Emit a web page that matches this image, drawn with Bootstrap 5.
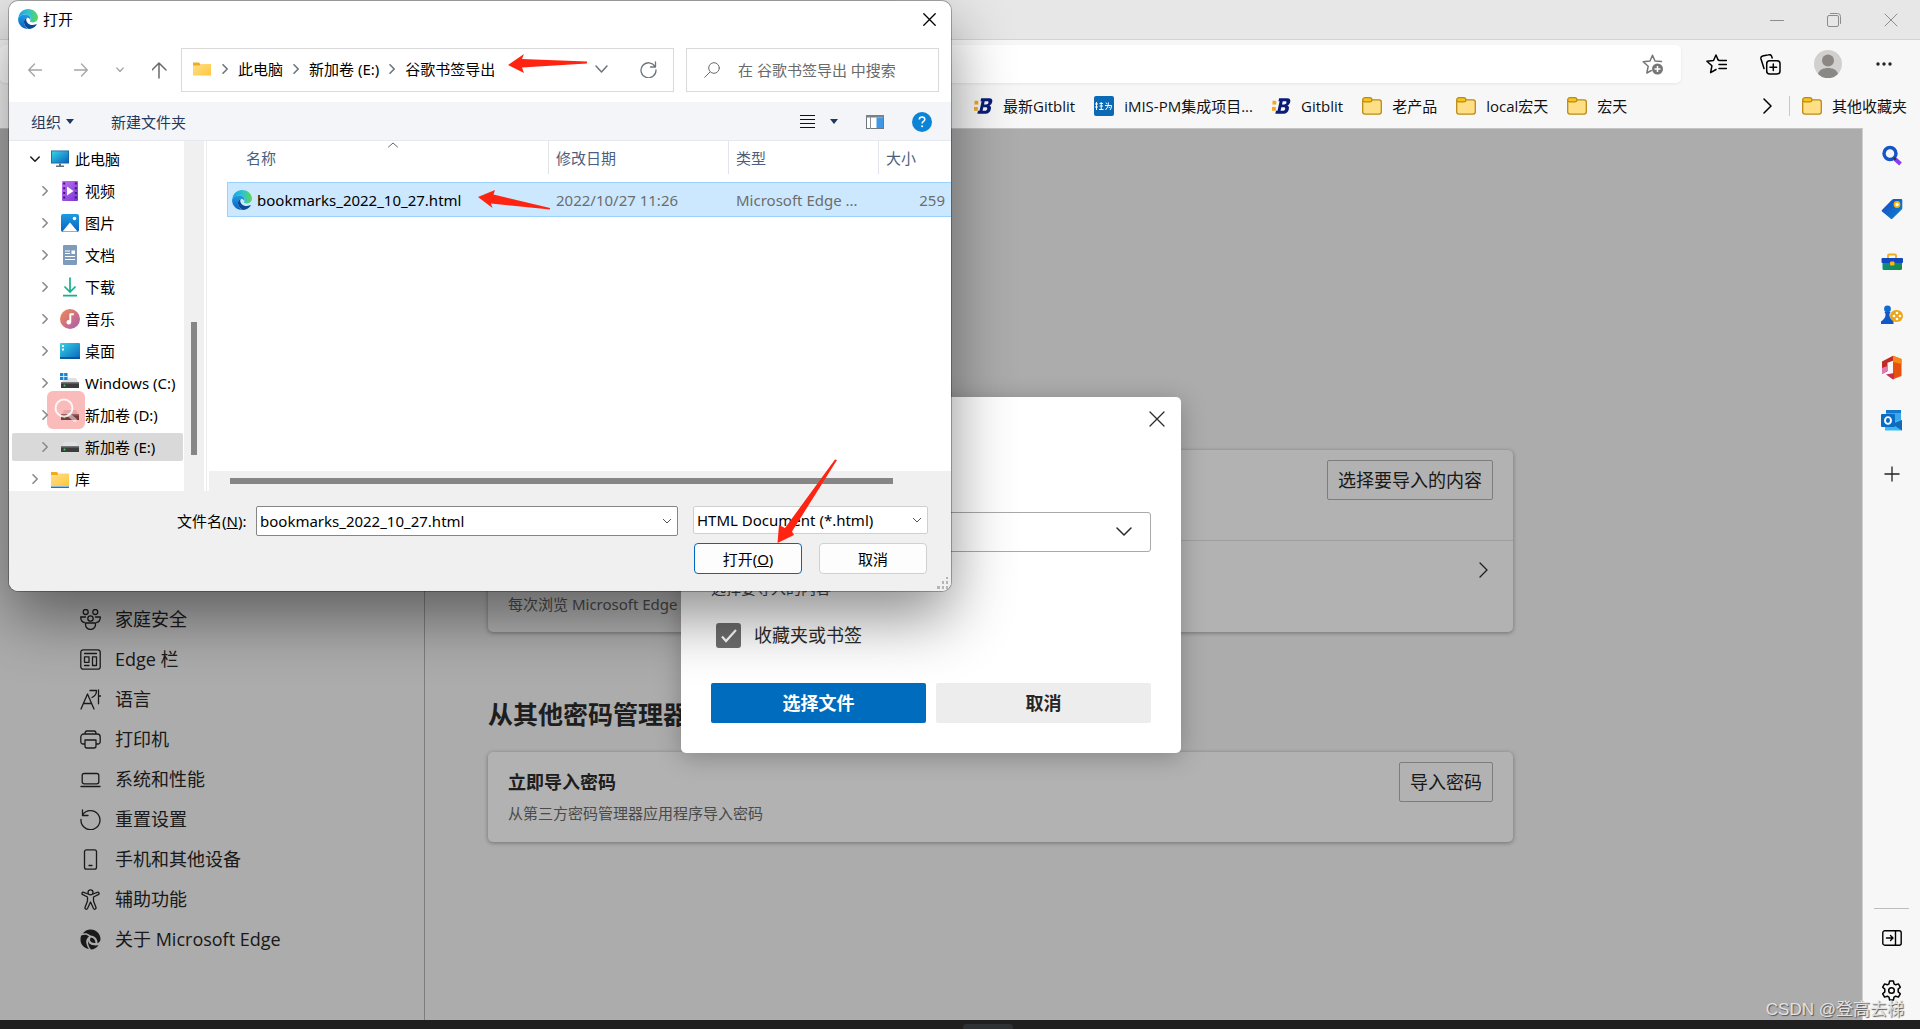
<!DOCTYPE html>
<html lang="zh-CN">
<head>
<meta charset="utf-8">
<meta name="viewport" content="width=device-width, initial-scale=1">
<title>导入浏览器数据</title>
<link href="https://cdn.jsdelivr.net/npm/bootstrap@5.3.0/dist/css/bootstrap.min.css" rel="stylesheet">
<style>
  :root { --ui: "Noto Sans", "Noto Sans CJK SC", sans-serif; --ui-web: "Open Sans", "Noto Sans CJK SC", sans-serif; }
  body { font-family: var(--ui); font-size: 15px; line-height: 20px; color: #000; background: #f7f7f7; overflow: hidden; }
  button, input, select { font-family: inherit; }
  svg { display: block; flex: none; }
  .bare { border: 0; background: none; padding: 0; color: inherit; display: flex; align-items: center; justify-content: center; }
  .ln { fill: none; stroke: currentColor; stroke-linecap: round; stroke-linejoin: round; }

  /* browser frame */
  .win-bar { height: 40px; background: #e7e7e7; border-bottom: 1px solid #d3d3d3; color: #8c8c8c; gap: 43px; padding-right: 22px; }
  .tool-bar { height: 45px; padding: 3px 27px 0 0; gap: 33px; }
  .omnibox { height: 38px; background: #fff; border-radius: 5px; box-shadow: 0 1px 3px rgba(0,0,0,.08); padding-right: 17px; margin-right: -8px; color: #767676; }
  .omnibox input { border: 0; outline: 0; background: none; }
  .fav-bar { height: 43px; padding: 0 13px 2px 974px; gap: 19px; font-family: var(--ui-web); }
  .fav-bar a { display: flex; align-items: center; gap: 10px; color: #111; text-decoration: none; white-space: nowrap; }
  .fav-rule { width: 1px; height: 20px; background: #c9c9c9; }

  /* settings page */
  .page { background: #f6f6f6; border-top: 1px solid #c4c4c4; border-right: 1px solid #d0d0d0; color: #2b2b2b; }
  .set-nav { width: 425px; border-right: 1px solid #b4b4b4; padding: 0 0 61px 80px; font-family: var(--ui-web); }
  .set-nav a { display: flex; align-items: center; height: 40px; gap: 14px; font-size: 18px; color: #262626; text-decoration: none; }
  .set-nav svg { width: 21px; height: 21px; }
  .set-main { padding: 321px 62px 0 63px; }
  .set-inner { max-width: 1025px; }
  .panel { background: #fff; border-radius: 5px; box-shadow: 0 1px 4px rgba(0,0,0,.35); }
  .panel-row { min-height: 90px; padding: 10px 20px; }
  .panel-row + .panel-row { min-height: 92px; border-top: 1px solid #e2e2e2; }
  .panel-name { font-size: 18px; line-height: 22px; font-weight: 700; padding-top: 9px; }
  .hint { color: #6b6b6b; font-size: 15px; }
  .panel-name + .hint { margin-top: 10px; }
  .set-title { font-size: 25px; line-height: 34px; font-weight: 700; margin: 65px 0 21px; white-space: nowrap; }
  .line-btn { height: 40px; padding: 0 10px; border: 1px solid #b4b4b4; border-radius: 2px; background: none; color: #262626; font-size: 18px; }

  /* import sheet */
  .veil { background: rgba(0,0,0,.3); }
  .sheet { width: 500px; height: 356px; background: #fff; border-radius: 5px; padding: 0 30px 30px; box-shadow: 0 4px 24px rgba(0,0,0,.25); color: #2b2b2b; }
  .sheet-x { height: 44px; margin-right: -14px; }
  .sheet-pick { margin-top: 71px; }
  .sheet-pick svg { margin-right: 19px; }
  .sheet select { height: 40px; border: 1px solid #a9a9a9; border-radius: 3px; background: #fff; appearance: none; color: #2b2b2b; }
  .sheet-label { margin-top: 26px; color: #444; }
  .sheet-check { gap: 13px; margin-bottom: 35px; font-size: 18px; }
  .sheet-acts { gap: 10px; }
  .tick { appearance: none; width: 25px; height: 25px; margin: 0 0 0 5px; border-radius: 3px; background: #6f6f6f url("data:image/svg+xml,%3Csvg xmlns='http://www.w3.org/2000/svg' viewBox='0 0 25 25'%3E%3Cpath d='M6 13.5l4 4.5L20 7' fill='none' stroke='%23fff' stroke-width='2.2'/%3E%3C/svg%3E"); }
  .sheet-btn { flex: 1; height: 40px; border: 0; border-radius: 2px; font-size: 18px; font-weight: 700; background: #ededed; color: #262626; }
  .sheet-btn.go { background: #006cbe; color: #fff; }

  /* right rail */
  .lower { min-height: 0; }
  .rail { width: 57px; padding: 1px 0 3px; }
  .rail button { height: 53px; width: 100%; }
  .rail-rule { width: 35px; height: 1px; background: #bdbdbd; margin-bottom: 2px; }
  .task-bar { height: 9px; background: #202020; }
  .task-tab { width: 50px; height: 5px; background: #2f3235; border-radius: 4px 4px 0 0; margin-left: 56px; }

  /* file picker window */
  .picker { left: 9px; top: 1px; width: 942px; height: 590px; background: #fff; border-radius: 9px; box-shadow: 0 0 0 1px rgba(0,0,0,.28), 0 26px 62px rgba(0,0,0,.45); overflow: hidden; z-index: 5; }
  .pk-title { height: 47px; padding: 0 15px 11px 9px; gap: 5px; }
  .pk-addr { height: 44px; padding: 0 12px 0 0; color: #6a6a6a; }
  .pk-nav { width: 172px; padding: 0 0 0 19px; gap: 28px; }
  .pk-nav .dim { color: #a5a5a5; }
  .crumbs { width: 493px; border: 1px solid #d9d9d9; padding: 0 16px 2px 10px; color: #000; white-space: nowrap; }
  .crumbs a { color: #000; text-decoration: none; }
  .crumbs > svg + svg, .crumbs a + svg { width: 10px; height: 10px; margin: 0 8px; color: #6c757d; }
  .find { width: 253px; border: 1px solid #d9d9d9; padding: 0 17px; gap: 18px; margin-left: 12px; }
  .find input { border: 0; outline: 0; padding: 0; min-width: 0; width: 100%; }
  .find input::placeholder { color: #6a6a6a; opacity: 1; }
  .pk-tools { height: 39px; margin-top: 10px; background: #f3f5f8; border-bottom: 1px solid #e5e8ec; padding: 1px 19px 0 22px; color: #1f3a5f; gap: 28px; }
  .caret-gap { gap: 5px; margin-right: 9px; }
  .view-gap { gap: 15px; }
  .pk-body { height: 350px; }
  .tree { width: 175px; padding: 2px 0 0; margin: 0; list-style: none; overflow: hidden; white-space: nowrap; }
  .tree li { height: 28px; margin: 2px 1px 4px 3px; padding-left: 28px; display: flex; align-items: center; }
  .tree li.top { padding-left: 18px; }
  .tree li.on { background: #d9d9d9; border-radius: 2px; }
  .tree li > svg:first-child { width: 10px; height: 10px; margin-right: 10px; color: #8a8a8a; }
  .tree li.open > svg:first-child { color: #222; }
  .tree li > svg:nth-child(2) { width: 20px; height: 20px; margin-right: 5px; }
  .v-track { width: 20px; background: #f0f0f0; padding: 181px 7px 0; }
  .v-thumb { height: 133px; background: #868686; }
  .files { border-left: 1px solid #ececec; margin-left: 2px; }
  .file-table { width: 724px; margin-left: 20px; table-layout: fixed; border-collapse: separate; border-spacing: 0; white-space: nowrap; }
  .col-name { width: 322px; } .col-date { width: 180px; } .col-type { width: 150px; } .col-size { width: 72px; }
  .file-table th { padding: 0 0 8px; font-weight: 400; color: #4a5f80; position: relative; }
  .file-table th span { display: flex; align-items: center; height: 33px; padding-left: 7px; border-right: 1px solid #e2e5e9; }
  .file-table th:first-child span { padding-left: 19px; }
  .file-table th:last-child span { border: 0; }
  .file-table th svg { position: absolute; left: 161px; top: 1px; color: #666; }
  .file-table td { height: 35px; padding: 0 6px 0 7px; background: #cce8ff; border: solid #99d1ff; border-width: 1px 0; color: #6d6d6d; overflow: hidden; }
  .file-table td:first-child { border-left-width: 1px; padding-left: 4px; color: #000; }
  .file-name { gap: 5px; }
  .h-track { height: 20px; background: #f0f0f0; margin-left: 2px; padding: 7px 58px 0 21px; }
  .h-thumb { height: 6px; background: #868686; }
  .pk-foot { background: #f0f0f0; padding: 15px 23px 0 168px; height: 100px; }
  .foot-label { width: 79px; line-height: 30px; }
  .box { height: 30px; padding: 0 26px 1px 3px; color: #000; border: 1px solid #868686; border-radius: 2px; outline: 0; appearance: none; background: #fff url("data:image/svg+xml,%3Csvg xmlns='http://www.w3.org/2000/svg' viewBox='0 0 10 10'%3E%3Cpath d='M1 3l4 4 4-4' fill='none' stroke='%23555'/%3E%3C/svg%3E") no-repeat right 5px center / 10px; }
  .box-type { width: 235px; height: 28px; margin-left: 15px; border-color: #cfcfcf; }
  .foot-acts { gap: 17px; padding: 7px 1px 0 0; }
  .win-btn { height: 31px; width: 108px; border: 1px solid #d0d0d0; border-radius: 4px; background: #fdfdfd; color: #000; padding: 0; }
  .win-btn.main-act { border-color: #0067c0; }
  .grip { right: 2px; bottom: 2px; color: #b5b5b5; }
  .marks { left: 0; top: 0; z-index: 7; pointer-events: none; }
  .snap { left: 47px; top: 391px; width: 38px; height: 38px; border-radius: 6px; background: rgba(240,55,55,.34); z-index: 6; }
  .stamp { right: 16px; bottom: 8px; z-index: 8; font-family: "Liberation Sans", "Noto Sans CJK SC", sans-serif; font-size: 17px; line-height: 22px; color: #e2e2e2; text-shadow: 1px 1px 1px #555; }
</style>
</head>
<body class="vh-100 d-flex flex-column position-relative">

<svg width="0" height="0" class="position-absolute" aria-hidden="true">
  <defs>
    <linearGradient id="gA" x1="0" y1="0" x2="1" y2="0"><stop offset="0" stop-color="#1f9fe0"/><stop offset=".5" stop-color="#2bc3d2"/><stop offset="1" stop-color="#5fd655"/></linearGradient>
    <linearGradient id="gB" x1="0" y1="0" x2="0" y2="1"><stop offset="0" stop-color="#1b9de2"/><stop offset="1" stop-color="#0a62c0"/></linearGradient>
    <linearGradient id="gC" x1="0" y1="0" x2="1" y2="1"><stop offset="0" stop-color="#36d3e6"/><stop offset="1" stop-color="#0a63bd"/></linearGradient>
    <linearGradient id="gD" x1="0" y1="0" x2="1" y2="1"><stop offset="0" stop-color="#ffe08a"/><stop offset="1" stop-color="#ffc63c"/></linearGradient>
    <linearGradient id="gE" x1="0" y1="0" x2="1" y2="1"><stop offset="0" stop-color="#f58a4b"/><stop offset="1" stop-color="#a85bb5"/></linearGradient>
    <linearGradient id="gF" x1="0" y1="0" x2="1" y2="1"><stop offset="0" stop-color="#c070f0"/><stop offset="1" stop-color="#7b35d6"/></linearGradient>
    <linearGradient id="gG" x1="0" y1="0" x2="1" y2="1"><stop offset="0" stop-color="#0c8f9c"/><stop offset="1" stop-color="#168a3c"/></linearGradient>
    <linearGradient id="gH" x1="0" y1="0" x2="1" y2="1"><stop offset="0" stop-color="#1746c8"/><stop offset="1" stop-color="#0d86c8"/></linearGradient>
  </defs>
  <symbol id="edge" viewBox="0 0 20 20">
    <path d="M.3 9C1 3.600 5 0 10 0c6 0 10 4.200 10 8.600 0 3-2.300 4.800-5 4.800-2.200 0-3.300-.8-3-1.700.5-.6.8-1.200.8-2C12.800 7.300 10 5.500 7 5.500 4 5.500 1.500 6.800.3 9z" fill="url(#gA)"/>
    <path d="M.1 9.500C1 7 3.800 5.500 7 5.500c3.200 0 5.600 1.900 5.600 4 0 .6-.2 1.200-.5 1.600C11.600 9.300 10.300 8.600 9 8.800c-2 .4-3.500 2.800-2.800 5.800.5 2.300 2 4.400 4 5.400C4.500 20-.3 15.600.1 9.500z" fill="url(#gB)"/>
    <path d="M6.200 14.600C5.500 11.600 7 9.200 9 8.800 7.800 10 8 12.200 9.600 14c2 2.200 5.600 2.600 8.400 1.200.6-.2.900.2.500.7C16.500 18.600 13.600 20 10.800 20c-2.400-.7-4.200-3-4.600-5.400z" fill="#0b4a98"/>
  </symbol>
  <symbol id="chev" viewBox="0 0 10 10"><path class="ln" stroke-width="1.600" d="M3 .8 7.200 5 3 9.200"/></symbol>
  <symbol id="chevd" viewBox="0 0 10 10"><path class="ln" stroke-width="1.600" d="M.8 3 5 7.200 9.200 3"/></symbol>
  <symbol id="dir" viewBox="0 0 20 16"><path d="M1 1.500h6l1.500 2V6H1z" fill="#f0ac1c"/><path d="M1 4.500h7l1.500-1.500H19V14.500H1z" fill="url(#gD)"/></symbol>
  <symbol id="lib" viewBox="0 0 20 20"><path d="M1 3h6l1.500 2V8H1z" fill="#f0ac1c"/><path d="M1 6h7l1.500-1.500H19V17H1z" fill="url(#gD)"/><path d="M1 17.500h18V19H1z" fill="#1379c8"/></symbol>
  <symbol id="fold" viewBox="0 0 20 18"><path d="M.7 3.200v11.600c0 1.400.9 2.300 2.300 2.300h14c1.400 0 2.300-.9 2.300-2.300V5c0-1.300-.8-2.200-2.200-2.200H9.500" fill="#ffdf85" stroke="#b98b12" stroke-width="1.300"/><rect x=".7" y=".7" width="9.200" height="4.200" rx="2.100" fill="#f8c41c" stroke="#b98b12" stroke-width="1.200"/></symbol>
  <symbol id="bee" viewBox="0 0 20 18"><g fill="#f5a81c"><rect x=".5" y="3.500" width="4" height="4"/><rect x="0" y="10" width="4" height="4"/></g><path fill="#0a1c78" fill-rule="evenodd" d="M7.500.8H16c3 0 4 2 3 4.500-.5 1.700-1.500 2.700-2.800 3.200 1.600.7 2 2 1.500 4-.7 3-2.600 4.700-5.700 4.700H3.500L4.200 14h1.600L8 4H6.800zM11.300 4l-.8 3.300h2.200c1.400 0 2.300-.7 2.500-1.800.2-1-.3-1.500-1.300-1.500zM9.800 10.300 9 14h2.500c1.300 0 2.100-.7 2.400-1.900.2-1.200-.4-1.800-1.500-1.800z"/></symbol>
  <symbol id="disk" viewBox="0 0 20 20"><path d="M4 5h12l2.500 5h-17z" fill="#dfe2e5"/><rect x="1" y="9" width="18" height="6" fill="#3c3c3c"/><rect x="1" y="9" width="18" height="1.500" fill="#777"/><circle cx="4.500" cy="12.500" r="1" fill="#2fd15a"/></symbol>
</svg>

<header>
  <div class="win-bar d-flex align-items-center justify-content-end">
    <button class="bare" aria-label="最小化"><svg width="14" height="14"><path class="ln" d="M.5 7.500h13"/></svg></button>
    <button class="bare" aria-label="还原"><svg width="14" height="14"><path class="ln" d="M3.500.5h7a3 3 0 0 1 3 3v7"/><rect class="ln" x=".5" y="2.500" width="11" height="11" rx="1.500"/></svg></button>
    <button class="bare" aria-label="关闭"><svg width="14" height="14"><path class="ln" d="m1 1 12 12M13 1 1 13"/></svg></button>
  </div>
  <div class="tool-bar d-flex align-items-center">
    <div class="omnibox flex-grow-1 d-flex align-items-center">
      <input class="flex-grow-1" type="text" aria-label="地址栏">
      <button class="bare" aria-label="收藏"><svg width="22" height="21" viewBox="0 0 22 21"><path class="ln" stroke-width="1.500" d="M19.500 7.500 13 7 10.500 1.200 8 7l-6.800.8 5 4.500L4.800 19l4.500-2.500"/><circle cx="15.500" cy="15" r="5.500" fill="currentColor"/><path d="M15.500 12v6m-3-3h6" stroke="#fff" stroke-width="1.500"/></svg></button>
    </div>
    <button class="bare" aria-label="收藏夹"><svg width="21" height="20" viewBox="0 0 21 20"><path class="ln" stroke-width="1.500" d="M12 5.700 10 1 7.500 6.500.9 7.300l5 4.500L4.600 18.700 10 15.500"/><path class="ln" stroke-width="1.500" d="M13 6.500h7.500M13 10.500h7.500M13 14.500h7.500M12 5.700l1 .8"/></svg></button>
    <button class="bare" aria-label="集锦"><svg width="21" height="21" viewBox="0 0 21 21"><rect class="ln" stroke-width="1.500" x="6.700" y="6.700" width="13.300" height="13.300" rx="3"/><path class="ln" stroke-width="1.500" d="M13.300 10v6.600M10 13.300h6.600M4 14.500 1 5a2.500 2.500 0 0 1 1.600-3L8.500.8A2.500 2.500 0 0 1 11.500 2l.7 2"/></svg></button>
    <button class="bare" aria-label="用户"><svg width="28" height="28" viewBox="0 0 28 28"><circle cx="14" cy="14" r="14" fill="#d2d0ce"/><circle cx="14" cy="10.500" r="6" fill="#8a8785"/><path d="M4 24c1-4 5-6 10-6s9 2 10 6a14 14 0 0 1-20 0z" fill="#8a8785"/></svg></button>
    <button class="bare" aria-label="更多"><svg width="18" height="4"><g fill="#222"><circle cx="3" cy="2" r="1.700"/><circle cx="9" cy="2" r="1.700"/><circle cx="15" cy="2" r="1.700"/></g></svg></button>
  </div>
  <nav class="fav-bar d-flex align-items-center" aria-label="收藏夹栏">
    <a href="#"><svg width="19" height="18"><use href="#bee"/></svg>最新Gitblit</a>
    <a href="#"><svg width="20" height="20" viewBox="0 0 20 20"><rect width="20" height="20" rx="2" fill="#0a6ab6"/><path d="M2.500 6v8M1 8h3M1 11h3M5.500 7.500H9M7.200 6v8M5.500 10H9M5 13.500h4.500M12 6.500l1 1.500M11 9.500h6.500q0 3-1.500 4.500M14.500 6.500q0 5-3 7.500M15 11l.7 1" stroke="#fff" fill="none"/></svg>iMIS-PM集成项目...</a>
    <a href="#"><svg width="19" height="18"><use href="#bee"/></svg>Gitblit</a>
    <a href="#"><svg width="20" height="18"><use href="#fold"/></svg>老产品</a>
    <a href="#"><svg width="20" height="18"><use href="#fold"/></svg>local宏天</a>
    <a href="#"><svg width="20" height="18"><use href="#fold"/></svg>宏天</a>
    <div class="ms-auto d-flex align-items-center">
      <button class="bare me-3" aria-label="更多收藏夹"><svg width="10" height="16"><path class="ln" stroke-width="1.500" d="m1 1 7 7-7 7"/></svg></button>
      <div class="fav-rule me-2"></div>
      <a href="#" class="ms-1"><svg width="20" height="18"><use href="#fold"/></svg>其他收藏夹</a>
    </div>
  </nav>
</header>

<div class="lower flex-grow-1 d-flex">
  <main class="page flex-grow-1 d-flex position-relative overflow-hidden">
    <nav class="set-nav d-flex flex-column justify-content-end flex-shrink-0" aria-label="设置">
      <a href="#"><svg viewBox="0 0 21 21"><g class="ln" stroke-width="1.300"><circle cx="5.700" cy="3" r="2.500"/><circle cx="15.300" cy="3" r="2.500"/><circle cx="10.500" cy="9.500" r="2.700"/><path d="M5.500 14h10v1.500a5 5 0 0 1-10 0zM5.500 8H.7c0 3 1 5 3.600 5.500M15.500 8h4.800c0 3-1 5-3.600 5.500"/></g></svg>家庭安全</a>
      <a href="#"><svg viewBox="0 0 21 21"><g class="ln" stroke-width="1.300"><rect x=".8" y=".8" width="19.400" height="19.400" rx="2.500"/><path d="M4.500 4.500h12M4.500 16.500H9"/><rect x="4.500" y="7.800" width="4.500" height="5.500"/><rect x="12.500" y="7.800" width="4" height="8.700"/></g></svg>Edge 栏</a>
      <a href="#"><svg viewBox="0 0 21 21"><path class="ln" stroke-width="1.300" d="M1 20 7.500 5 14 20M3.500 14.500h8M10 1.500h6.500q0 5-4.500 7M18.500.8v14M18.500 7H21"/></svg>语言</a>
      <a href="#"><svg viewBox="0 0 21 21"><path class="ln" stroke-width="1.300" d="M5 15H3a2.200 2.200 0 0 1-2.200-2.200V8A3 3 0 0 1 3.800 5h13.400a3 3 0 0 1 3 3v4.800A2.200 2.200 0 0 1 18 15h-2M5 4.500q0-2.500 2-2.500h7q2 0 2 2.500M5 11h11v6q0 2-2 2H7q-2 0-2-2z"/></svg>打印机</a>
      <a href="#"><svg viewBox="0 0 21 21"><path class="ln" stroke-width="1.300" d="M1 17.500h19"/><rect class="ln" stroke-width="1.300" x="2.200" y="4.500" width="16.600" height="10.300" rx="2"/></svg>系统和性能</a>
      <a href="#"><svg viewBox="0 0 21 21"><path class="ln" stroke-width="1.300" d="M2.500 1v5.500H8M2.500 6A9.500 9.500 0 1 1 1 10.500"/></svg>重置设置</a>
      <a href="#"><svg viewBox="0 0 21 21"><rect class="ln" stroke-width="1.300" x="4.500" y=".8" width="12" height="19.400" rx="2"/><path class="ln" stroke-width="1.300" d="M9 16.500h3"/></svg>手机和其他设备</a>
      <a href="#"><svg viewBox="0 0 21 21"><g class="ln" stroke-width="1.300"><circle cx="10.500" cy="3.300" r="2.500"/><path d="M8 5 3.700 3.300C2 2.800 1.300 5 2.800 5.700L7.500 8v4L5 18.500c-.4 1.700 1.800 2.300 2.500 1L10.500 13l3 6.500c.7 1.300 2.900.7 2.500-1L13.500 12V8l4.700-2.300c1.500-.7.8-2.900-.9-2.400L13 5"/></g></svg>辅助功能</a>
      <a href="#"><svg viewBox="0 0 21 21"><path fill="currentColor" d="M2.500 4.700C4.500 2 7.500.5 10.500.5c6 0 10 4.500 10 9.500 0 2-1 3.500-3 4.300.3-4-2.500-7.600-7-7.800C7.500 4.200 5 4 2.500 4.700zM1.200 6.500C4.500 5 7.300 5.600 9 7.500 6.500 9 5.700 12 6.500 15c.4 1.800 1.200 3.500 2.400 5C3.500 19 .3 15 .5 10.200c0-1.300.2-2.500.7-3.700zM8 11.500c.5 3.500 3.500 5.500 10.500 4.800-1.800 2.600-4.300 4.200-7.500 4.200-2-2-3.300-5.500-3-9zM10.500 8.700c2.700-.3 5 1.800 5 5.300-3 .3-5.200-1-5.600-3.300z"/></svg>关于 Microsoft Edge</a>
    </nav>
    <section class="set-main flex-grow-1">
      <div class="set-inner">
        <div class="panel">
          <div class="panel-row d-flex justify-content-end align-items-start"><button class="line-btn">选择要导入的内容</button></div>
          <div class="panel-row d-flex justify-content-between align-items-start">
            <span class="hint align-self-end pb-2">每次浏览 Microsoft Edge</span>
            <button class="bare mt-2 me-1" aria-label="打开"><svg width="10" height="24"><path class="ln" stroke-width="1.300" d="m1 4 7 7-7 7"/></svg></button>
          </div>
        </div>
        <h2 class="set-title">从其他密码管理器</h2>
        <div class="panel">
          <div class="panel-row d-flex justify-content-between align-items-start">
            <div>
              <div class="panel-name">立即导入密码</div>
              <div class="hint">从第三方密码管理器应用程序导入密码</div>
            </div>
            <button class="line-btn">导入密码</button>
          </div>
        </div>
      </div>
    </section>

    <div class="veil position-absolute top-0 start-0 w-100 h-100 d-flex align-items-center justify-content-center">
      <form class="sheet d-flex flex-column" aria-label="导入">
        <div class="d-flex justify-content-end"><button type="button" class="bare sheet-x" aria-label="关闭"><svg width="16" height="16"><path class="ln" stroke-width="1.300" d="m1 1 14 14M15 1 1 15"/></svg></button></div>
        <div class="sheet-pick position-relative">
          <select class="w-100" aria-label="导入位置"><option></option></select>
          <svg class="position-absolute top-50 end-0 translate-middle-y" width="16" height="10"><path class="ln" stroke-width="1.500" d="m1 1 7 7 7-7"/></svg>
        </div>
        <div class="sheet-label">选择要导入的内容</div>
        <div class="sheet-check d-flex align-items-center mt-auto">
          <input class="tick" type="checkbox" id="fav" checked><label for="fav">收藏夹或书签</label>
        </div>
        <div class="sheet-acts d-flex">
          <button type="button" class="sheet-btn go">选择文件</button>
          <button type="button" class="sheet-btn">取消</button>
        </div>
      </form>
    </div>
  </main>

  <aside class="rail d-flex flex-column align-items-center flex-shrink-0">
    <button class="bare" aria-label="搜索"><svg width="22" height="22" viewBox="0 0 22 22"><circle cx="9" cy="8.500" r="6" fill="none" stroke="#1456c4" stroke-width="3.400"/><path d="m14 14 5.500 5" stroke="#8a3df0" stroke-width="4"/><path d="m12.800 12.800 2 2" stroke="#333" stroke-width="2"/></svg></button>
    <button class="bare" aria-label="购物"><svg width="22" height="22" viewBox="0 0 22 22"><path d="M1 12 11 1.800q.8-.8 2-.8h7q1.300 0 1.300 1.300V10q0 1-.8 1.800L11.500 20.500q-1 1-2 0L1 13.500q-.7-.7 0-1.500z" fill="url(#gH)"/><circle cx="16" cy="6.500" r="2.600" fill="#fff" stroke="#f5b40f" stroke-width="1.600"/></svg></button>
    <button class="bare" aria-label="工具"><svg width="22" height="18" viewBox="0 0 22 18"><path d="M7 5V2.500q0-1 1-1h6q1 0 1 1V5" fill="none" stroke="#f0ad1c" stroke-width="1.800"/><rect x="1.500" y="5" width="19.500" height="12" rx="1.500" fill="url(#gG)"/><rect x=".5" y="5" width="21.500" height="5" rx="1" fill="#1147c0"/><rect x="9" y="8.500" width="4.500" height="4" rx="1" fill="#f8b51c"/></svg></button>
    <button class="bare" aria-label="游戏"><svg width="22" height="20" viewBox="0 0 22 20"><rect x="9" y="5" width="13" height="12" rx="6" fill="#eda51c"/><g fill="#fff"><circle cx="16" cy="8" r="1.300"/><circle cx="13" cy="11" r="1.300"/><circle cx="19" cy="11" r="1.300"/><circle cx="16" cy="14" r="1.300"/></g><circle cx="6.500" cy="4" r="3.400" fill="#0f6cd0"/><path d="M3.500 7h6l-1 2c0 3 .5 4.500 4 7.500V19H0v-2.500C4 13.500 4.500 12 4.500 9z" fill="#1059c8"/></svg></button>
    <button class="bare" aria-label="Office"><svg width="21" height="25" viewBox="0 0 21 25"><path d="M1 6.500 12 .8v5L6.500 7.700v8.500L1 19z" fill="#c22a24"/><path d="M1 13l5.500-2v5L1 19z" fill="#e07ab0"/><path d="M12 .8 20.500 4v17L12 24.300z" fill="#e8500c"/><path d="M12 .8 20.500 4v5L12 7z" fill="#f58a14"/><path d="M5 19.500 13 18v6.300h-1.500z" fill="#cc2a50"/></svg></button>
    <button class="bare" aria-label="Outlook"><svg width="22" height="21" viewBox="0 0 22 21"><rect x="5" y="0" width="15" height="13" fill="#3aa8ea"/><rect x="5" y="0" width="15" height="3" fill="#1479cf"/><path d="M4 10h17v10.500H4z" fill="#36baf5"/><path d="M21 10v10.500L11 14z" fill="#1668b5"/><rect x="0" y="4" width="14" height="13" rx="1" fill="#0b6cc4"/><ellipse cx="7" cy="10.500" rx="3" ry="3.400" fill="none" stroke="#fff" stroke-width="1.900"/></svg></button>
    <button class="bare" aria-label="添加"><svg width="16" height="16"><path d="M8 .5v15M.5 8h15" stroke="#222" stroke-width="1.300"/></svg></button>
    <div class="rail-rule mt-auto"></div>
    <button class="bare" aria-label="隐藏边栏"><svg width="20" height="16" viewBox="0 0 20 16"><g class="ln" stroke-width="1.400"><rect x=".8" y=".8" width="18.400" height="14.400" rx="2"/><path d="M13.500 1v14M4.500 8h6M8.500 5.500 11 8l-2.500 2.500"/></g></svg></button>
    <button class="bare" aria-label="设置"><svg width="21" height="21" viewBox="0 0 21 21"><g class="ln" stroke-width="1.500"><circle cx="10.500" cy="10.500" r="2.800"/><path d="M8.600 1h3.800l.6 2.800 1.700 1 2.700-.9 1.900 3.300-2.100 1.900v2.800l2.100 1.900-1.900 3.300-2.700-.9-1.700 1-.6 2.800H8.600L8 17.200l-1.700-1-2.700.9-1.900-3.300 2.100-1.900V9.100L1.700 7.200l1.900-3.300 2.700.9 1.700-1z"/></g></svg></button>
  </aside>
</div>
<footer class="task-bar d-flex align-items-end justify-content-center"><div class="task-tab"></div></footer>

<!-- file picker -->
<section class="picker position-absolute d-flex flex-column" role="dialog" aria-label="打开">
  <div class="pk-title d-flex align-items-center">
    <svg width="20" height="20"><use href="#edge"/></svg><span>打开</span>
    <button class="bare ms-auto" aria-label="关闭"><svg width="13" height="13"><path class="ln" stroke-width="1.300" d="m.8.8 11.400 11.400M12.200.8.8 12.200"/></svg></button>
  </div>
  <div class="pk-addr d-flex">
    <div class="pk-nav d-flex align-items-center flex-shrink-0">
      <button class="bare dim me-1" aria-label="后退"><svg width="14" height="14"><path class="ln" stroke-width="1.300" d="M13.500 7H.8M6.500 1 .7 7l5.800 6"/></svg></button>
      <button class="bare dim" aria-label="前进"><svg width="14" height="14"><path class="ln" stroke-width="1.300" d="M.5 7h12.700M7.500 1l5.800 6-5.800 6"/></svg></button>
      <button class="bare dim" aria-label="最近"><svg width="8" height="6"><path class="ln" stroke-width="1.300" d="m.8 1 3.200 3.500L7.200 1"/></svg></button>
      <button class="bare" aria-label="上移"><svg width="16" height="17" viewBox="3 0 16 17"><path class="ln" stroke-width="1.500" d="M8 16V1M1 8l7-7 7 7" transform="translate(2)"/></svg></button>
    </div>
    <div class="crumbs d-flex align-items-center flex-shrink-0">
      <svg width="20" height="16"><use href="#dir"/></svg>
      <svg><use href="#chev"/></svg><a href="#">此电脑</a>
      <svg><use href="#chev"/></svg><a href="#">新加卷 (E:)</a>
      <svg><use href="#chev"/></svg><a href="#">谷歌书签导出</a>
      <button class="bare ms-auto text-secondary" aria-label="展开"><svg width="13" height="8"><path class="ln" stroke-width="1.500" d="m1 1 5.500 6L12 1"/></svg></button>
      <button class="bare ms-4 ps-2 text-secondary" aria-label="刷新"><svg width="17" height="17"><path class="ln" stroke-width="1.300" d="M15 5.500A7.500 7.500 0 1 0 16 9M15.500 1v5H10.500"/></svg></button>
    </div>
    <div class="find d-flex align-items-center">
      <svg width="16" height="16"><circle class="ln" cx="10" cy="6" r="5.300"/><path class="ln" d="M6 10 .7 15.300"/></svg>
      <input type="search" aria-label="搜索" placeholder="在 谷歌书签导出 中搜索">
    </div>
  </div>
  <div class="pk-tools d-flex align-items-center flex-shrink-0">
    <button class="bare caret-gap">组织<svg width="8" height="5"><path d="M0 0h8L4 5z" fill="currentColor"/></svg></button>
    <button class="bare">新建文件夹</button>
    <button class="bare ms-auto view-gap" aria-label="视图"><svg width="15" height="14"><path d="M0 .5h15M0 4.500h15M0 8.500h15M0 12.500h15" stroke="#111" stroke-width="1"/></svg><svg width="8" height="5"><path d="M0 0h8L4 5z" fill="currentColor"/></svg></button>
    <button class="bare" aria-label="预览窗格"><svg width="18" height="14"><rect x=".5" y=".5" width="17" height="13" fill="#fff" stroke="#6f7780"/><path d="M0 0h18v2.500H0z" fill="#7b8188"/><path d="M4.500 2v12" stroke="#8a8f95"/><rect x="10.500" y="2.500" width="6.500" height="10.500" fill="#3f98e6"/></svg></button>
    <button class="bare" aria-label="帮助"><svg width="20" height="20"><circle cx="10" cy="10" r="10" fill="#0b84d8"/><path d="M7.300 7.500C7.300 5.800 8.500 5 10 5s2.800.9 2.800 2.400c0 1.900-2.700 2.100-2.700 4.100" fill="none" stroke="#fff" stroke-width="1.500"/><circle cx="10.100" cy="14.300" r="1" fill="#fff"/></svg></button>
  </div>
  <div class="pk-body d-flex flex-shrink-0">
    <ul class="tree flex-shrink-0">
      <li class="top open"><svg><use href="#chevd"/></svg><svg viewBox="0 0 20 20"><rect x="1" y="1.500" width="18" height="13" fill="#1c5f9b"/><rect x="1.800" y="2.300" width="16.400" height="11.400" fill="url(#gC)"/><path d="M9 14.500h2v2h3V18H6v-1.500h3z" fill="#5f6e7c"/></svg>此电脑</li>
      <li><svg><use href="#chev"/></svg><svg viewBox="0 0 20 20"><rect x="2" width="16" height="20" rx="1" fill="url(#gF)"/><path d="M4.200 1.500v18M15.800 1.500v18" stroke="#3d1a78" stroke-width="2" stroke-dasharray="2 2.700"/><path d="M7 5.500 13.500 10 7 14.500z" fill="#fff"/></svg>视频</li>
      <li><svg><use href="#chev"/></svg><svg viewBox="0 0 20 20"><rect x="1" y="1" width="18" height="18" rx="2" fill="url(#gB)"/><path d="M2.500 18.500 10 9.500l7.500 9z" fill="#fff"/><circle cx="14.500" cy="5.500" r="1.800" fill="#fff"/></svg>图片</li>
      <li><svg><use href="#chev"/></svg><svg viewBox="0 0 20 20"><rect x="3" width="14" height="20" rx="1" fill="#7f9bbc"/><path d="M5 6h5M5 8.500h5M5 11.500h10M5 14.500h10" stroke="#fff" stroke-width="1.200"/><rect x="11.500" y="5.500" width="3.500" height="3.500" fill="#fff"/></svg>文档</li>
      <li><svg><use href="#chev"/></svg><svg viewBox="0 0 20 20"><path d="M10 .5v14M4.500 9.500 10 15l5.500-5.500M3 18.700h14" stroke="#16b08a" stroke-width="1.700" fill="none"/></svg>下载</li>
      <li><svg><use href="#chev"/></svg><svg viewBox="0 0 20 20"><circle cx="10" cy="10" r="10" fill="url(#gE)"/><path d="M10.300 4.500V13M10.300 5.200h3.500" stroke="#fff" stroke-width="1.900"/><circle cx="8.800" cy="13.200" r="2.300" fill="#fff"/></svg>音乐</li>
      <li><svg><use href="#chev"/></svg><svg viewBox="0 0 20 20"><rect y="2" width="20" height="16" rx="1" fill="url(#gC)"/><rect x="2" y="4" width="2" height="2" fill="#fff"/><rect x="2" y="7.500" width="2" height="2" fill="#fff"/><path d="M0 17h20" stroke="#0a4a8c" stroke-width="1.500"/></svg>桌面</li>
      <li><svg><use href="#chev"/></svg><svg viewBox="0 0 20 20"><path d="M4 5h12l2.500 5h-17z" fill="#dfe2e5"/><rect x="1" y="9" width="18" height="6" fill="#3c3c3c"/><rect x="1" y="9" width="18" height="1.500" fill="#777"/><circle cx="4.500" cy="12.500" r="1" fill="#2fd15a"/><path d="M0 0h7.500v7H0z" fill="#0f86dd"/><path d="M3.700 0v7M0 3.500h7.500" stroke="#fff" stroke-width=".8"/></svg>Windows (C:)</li>
      <li><svg><use href="#chev"/></svg><svg><use href="#disk"/></svg>新加卷 (D:)</li>
      <li class="on"><svg><use href="#chev"/></svg><svg><use href="#disk"/></svg>新加卷 (E:)</li>
      <li class="top"><svg><use href="#chev"/></svg><svg><use href="#lib"/></svg>库</li>
    </ul>
    <div class="v-track flex-shrink-0"><div class="v-thumb"></div></div>
    <div class="files flex-grow-1 d-flex flex-column justify-content-between">
      <table class="file-table">
        <colgroup><col class="col-name"><col class="col-date"><col class="col-type"><col class="col-size"></colgroup>
        <thead><tr><th scope="col"><span>名称</span><svg width="10" height="6"><path class="ln" d="m.5 5 4.500-4 4.500 4"/></svg></th><th scope="col"><span>修改日期</span></th><th scope="col"><span>类型</span></th><th scope="col"><span>大小</span></th></tr></thead>
        <tbody><tr><td><span class="file-name d-flex align-items-center"><svg width="20" height="20"><use href="#edge"/></svg>bookmarks_2022_10_27.html</span></td><td>2022/10/27 11:26</td><td>Microsoft Edge ...</td><td class="text-end">259</td></tr></tbody>
      </table>
      <div class="h-track"><div class="h-thumb"></div></div>
    </div>
  </div>
  <div class="pk-foot position-relative">
    <div class="d-flex align-items-start">
      <label for="fname" class="foot-label">文件名(<u>N</u>):</label>
      <input class="box flex-grow-1" id="fname" type="text" value="bookmarks_2022_10_27.html">
      <select class="box box-type" aria-label="文件类型"><option>HTML Document (*.html)</option></select>
    </div>
    <div class="foot-acts d-flex justify-content-end">
      <button class="win-btn main-act">打开(<u>O</u>)</button>
      <button class="win-btn">取消</button>
    </div>
    <svg class="grip position-absolute" width="12" height="12"><path fill="currentColor" d="M9 0h2v2H9zM9 4h2v3H9zM9 9h2v3H9zM5 4h2v3H5zM5 9h2v3H5zM0 9h3v3H0z"/></svg>
  </div>
</section>

<div class="snap position-absolute"><svg width="38" height="38"><circle cx="17" cy="17" r="8.500" fill="none" stroke="#fff" stroke-opacity=".85" stroke-width="2"/><path d="m22 24 6 5" stroke="#fff" stroke-opacity=".5" stroke-width="4" stroke-linecap="round"/></svg></div>
<svg class="marks position-absolute" width="860" height="560" aria-hidden="true"><g fill="#ff2412"><path d="M508 65 524 54 522 59 587 61.500V63.500L522 67.500 524 73z"/><path d="M478 197 495 190 493.500 194.500 550 208V209.500L491 203.500 492.500 208z"/><path d="M777.500 543 779 525 785 528 835 459.500 837 460 792 531.500 794 535z"/></g></svg>
<div class="stamp position-absolute">CSDN @登高去梯</div>

<script src="https://cdn.jsdelivr.net/npm/bootstrap@5.3.0/dist/js/bootstrap.bundle.min.js"></script>
</body>
</html>
